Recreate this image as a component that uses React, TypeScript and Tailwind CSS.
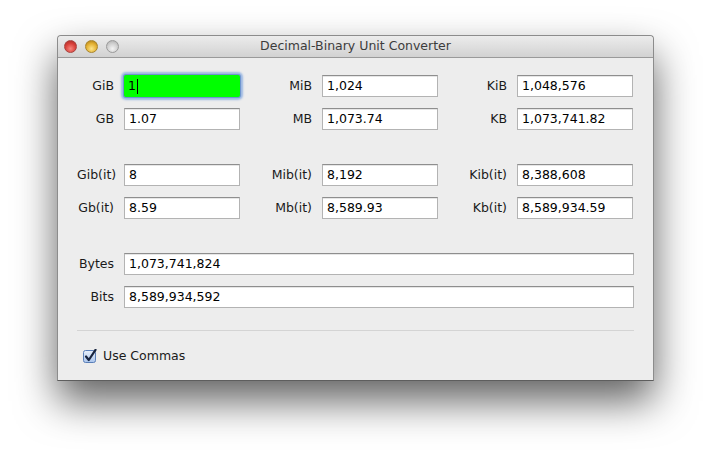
import React from "react";

const font = { fontFamily: '"DejaVu Sans", "Liberation Sans", sans-serif' };

function Field({ value, w = "w-[116px]", focus = false }: { value: string; w?: string; focus?: boolean }) {
  if (focus) {
    return (
      <div className={`${w} h-[22px] rounded-[2px] shadow-[0_0_0_1px_#6f95cf,0_0_2px_3px_#9db9e3] bg-[#00ff00] flex items-center pl-[4px] text-[12.5px] text-black`}>
        <span>{value}</span>
        <span className="inline-block w-px h-[15px] bg-black ml-px" />
      </div>
    );
  }
  return (
    <div className={`${w} h-[22px] bg-white border border-[#b3b3b3] border-t-[#8e8e8e] shadow-[inset_0_1px_0_#e6e6e6] flex items-center pl-[4px] text-[12.5px] text-black`}>
      {value}
    </div>
  );
}

function Cell({ label, value, lw, focus }: { label: string; value: string; lw: string; focus?: boolean }) {
  return (
    <div className="flex items-center gap-[10px]">
      <div className={`${lw} text-right text-[12.5px] text-[#1a1a1a]`}>{label}</div>
      <Field value={value} focus={focus} />
    </div>
  );
}

function Row({ cells }: { cells: [string, string, boolean?][] }) {
  const lws = ["w-[37px]", "w-[72px]", "w-[69px]"];
  return (
    <div className="flex">
      {cells.map((c, i) => (
        <Cell key={i} label={c[0]} value={c[1]} lw={lws[i]} focus={c[2]} />
      ))}
    </div>
  );
}

export default function App() {
  return (
    <div className="w-[711px] h-[460px] bg-white overflow-hidden" style={font}>
      <div className="ml-[57px] mt-[35px] w-[597px] h-[346px] flex flex-col border border-[#8c8c8c] border-b-[#5e5e5e] rounded-t-[4px] shadow-[0_20px_40px_rgba(0,0,0,0.62)] bg-[#ededed]">
        <div className="h-[22px] shrink-0 relative flex items-center justify-center rounded-t-[4px] bg-gradient-to-b from-[#ececec] to-[#d2d2d2] border-b border-[#9a9a9a]">
          <div className="absolute left-[6px] top-[4px] flex gap-[8px]">
            <div className="w-[13px] h-[13px] rounded-full border border-[#a8433f] bg-[radial-gradient(circle_at_50%_70%,#f7867d,#d8403a_55%,#9f2a24)]" />
            <div className="w-[13px] h-[13px] rounded-full border border-[#a9852c] bg-[radial-gradient(circle_at_50%_70%,#fde58a,#e3b032_55%,#a07415)]" />
            <div className="w-[13px] h-[13px] rounded-full border border-[#9a9a9a] bg-[radial-gradient(circle_at_50%_70%,#f4f4f4,#cfcfcf_55%,#a8a8a8)]" />
          </div>
          <span className="text-[12.5px] text-[#3c3c3c]">Decimal-Binary Unit Converter</span>
        </div>
        <div className="flex flex-col pl-[19px] pt-[17px]">
          <div className="flex flex-col gap-[11px]">
            <Row cells={[["GiB", "1", true], ["MiB", "1,024"], ["KiB", "1,048,576"]]} />
            <Row cells={[["GB", "1.07"], ["MB", "1,073.74"], ["KB", "1,073,741.82"]]} />
          </div>
          <div className="flex flex-col gap-[11px] mt-[34px]">
            <Row cells={[["Gib(it)", "8"], ["Mib(it)", "8,192"], ["Kib(it)", "8,388,608"]]} />
            <Row cells={[["Gb(it)", "8.59"], ["Mb(it)", "8,589.93"], ["Kb(it)", "8,589,934.59"]]} />
          </div>
          <div className="flex flex-col gap-[11px] mt-[34px]">
            <div className="flex items-center gap-[10px]">
              <div className="w-[37px] text-right text-[12.5px] text-[#1a1a1a]">Bytes</div>
              <Field value="1,073,741,824" w="w-[510px]" />
            </div>
            <div className="flex items-center gap-[10px]">
              <div className="w-[37px] text-right text-[12.5px] text-[#1a1a1a]">Bits</div>
              <Field value="8,589,934,592" w="w-[510px]" />
            </div>
          </div>
          <div className="mt-[22px] w-[557px] h-px bg-[#d4d4d4]" />
          <div className="mt-[16px] flex items-center gap-[6px] pl-[6px]">
            <svg width="14" height="14" viewBox="0 0 14 14">
              <defs>
                <linearGradient id="cb" x1="0" y1="0" x2="0" y2="1">
                  <stop offset="0" stopColor="#e8f0fb" />
                  <stop offset="1" stopColor="#a9c4ec" />
                </linearGradient>
              </defs>
              <rect x="0.5" y="1.5" width="12" height="12" rx="2" fill="url(#cb)" stroke="#5a7fb8" />
              <path d="M3 7.5 L5.8 11 L12.5 0.8" fill="none" stroke="#17243f" strokeWidth="2.2" strokeLinecap="round" strokeLinejoin="round" />
            </svg>
            <span className="text-[12.5px] text-[#1a1a1a]">Use Commas</span>
          </div>
        </div>
      </div>
    </div>
  );
}
